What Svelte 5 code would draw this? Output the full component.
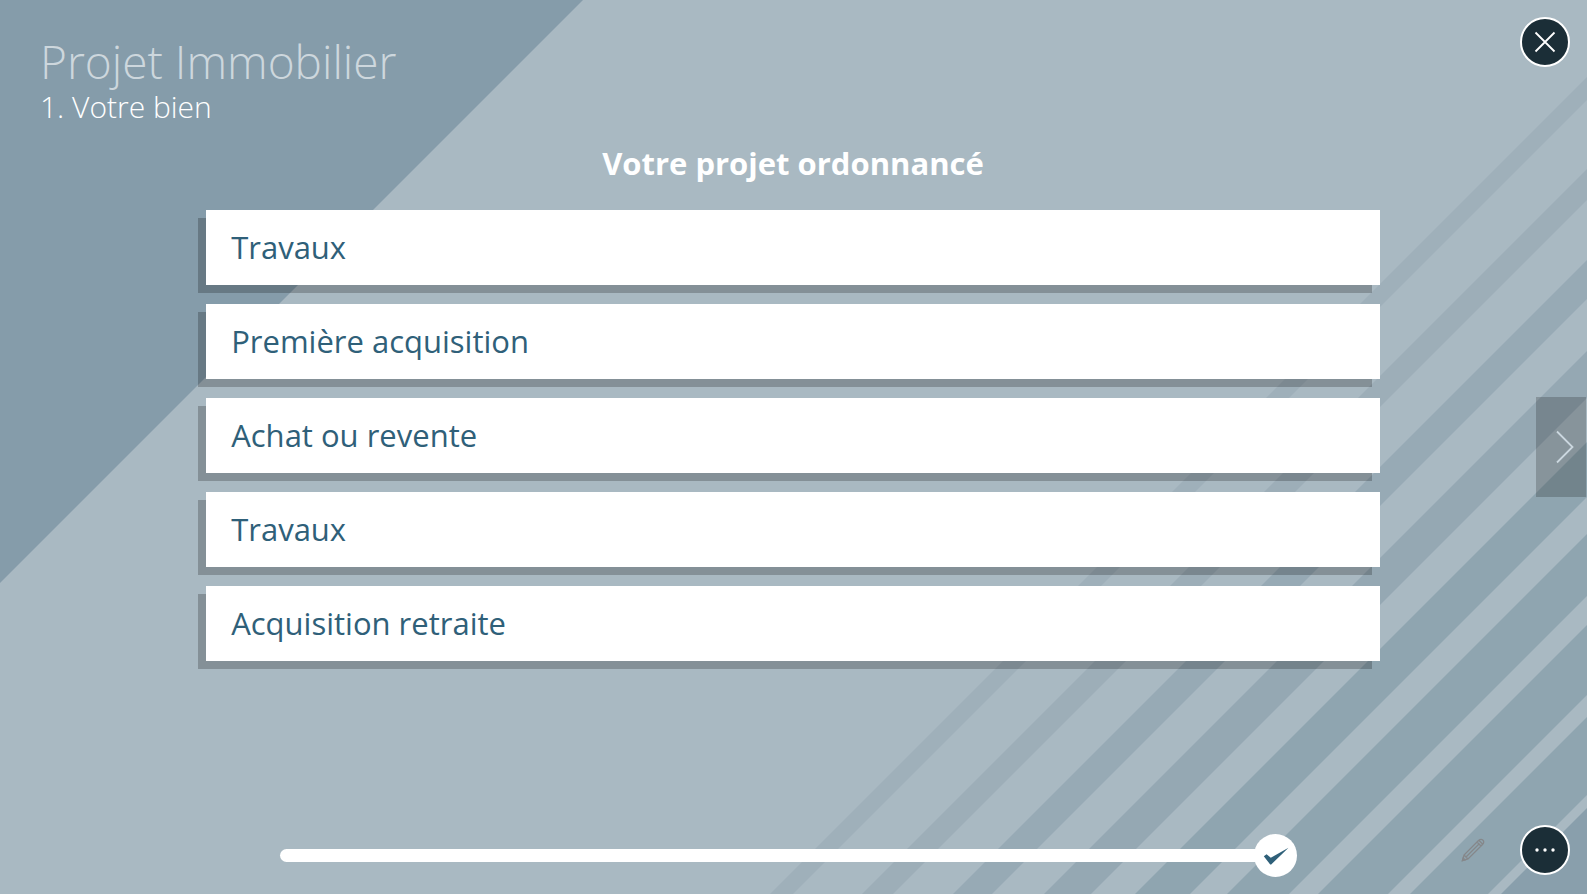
<script>
  const steps = [
    'Travaux',
    'Première acquisition',
    'Achat ou revente',
    'Travaux',
    'Acquisition retraite'
  ];

  // Each diagonal band is given by its two x positions on the line y = 0.
  const bands = [
    { from: 1664, to: 1687, fill: '#9fb0ba' },
    { from: 1756, to: 1787, fill: '#9daeb8' },
    { from: 1847, to: 1886, fill: '#97aab5' },
    { from: 1938, to: 1985, fill: '#95a8b3' },
    { from: 2029, to: 2084, fill: '#8fa5b0' },
    { from: 2121, to: 2183, fill: '#8fa5b0' },
    { from: 2212, to: 2282, fill: '#8fa5b0' },
    { from: 2304, to: 2382, fill: '#8fa5b0' },
    { from: 2395, to: 2482, fill: '#899fac' }
  ];
  const points = ({ from, to }) =>
    `${from},0 ${to},0 ${to - 894},894 ${from - 894},894`;
</script>

<div class="page">
  <svg class="backdrop" viewBox="0 0 1587 894" preserveAspectRatio="xMaxYMax slice" aria-hidden="true">
    <polygon points="0,0 583,0 0,583" fill="#859caa" />
    {#each bands as band}
      <polygon points={points(band)} fill={band.fill} />
    {/each}
  </svg>

  <header>
    <div>
      <h1>Projet Immobilier</h1>
      <p class="chapter">1. Votre bien</p>
    </div>
    <button class="round" type="button" aria-label="Fermer">
      <svg width="24" height="24" viewBox="0 0 24 24" aria-hidden="true">
        <path d="M2.5 2.5 21.5 21.5M21.5 2.5 2.5 21.5" stroke="#fff" stroke-width="1.8" />
      </svg>
    </button>
  </header>

  <main>
    <h2>Votre projet ordonnancé</h2>
    <ol>
      {#each steps as step}
        <li>{step}</li>
      {/each}
    </ol>
  </main>

  <button class="next" type="button" aria-label="Suivant">
    <svg width="18" height="34" viewBox="0 0 18 34" aria-hidden="true">
      <path d="M1 1.5 16.5 17 1 32.5" fill="none" stroke="#cbd7df" stroke-width="1.8" />
    </svg>
  </button>

  <footer>
    <div class="progress">
      <div class="track"></div>
      <button class="done" type="button" aria-label="Valider">
        <svg width="26" height="20" viewBox="0 0 26 20" aria-hidden="true">
          <path d="M.8 10.300 3.600 8.300 7.800 11.800 25.500 1.800 8.200 18.500 7.200 18.500Z" fill="#2f6079" />
        </svg>
      </button>
    </div>
    <div class="tools">
      <button class="edit" type="button" aria-label="Annoter">
        <svg width="24" height="24" viewBox="0 0 24 24" fill="none" stroke="#85878a" stroke-width="1.3" aria-hidden="true">
          <path d="M1.500 22.500 3 17 17.500 2.500Q20 .5 22 2.200 23.600 4 21.500 6.500L7 21ZM3 17 7 21M16 4 20 8M18 2.500 21.800 6.200M5 19 18.500 5.500" />
          <path d="M1.500 22.500 2.200 20 4 21.800Z" fill="#85878a" />
        </svg>
      </button>
      <button class="round" type="button" aria-label="Plus d'options">
        <svg width="24" height="24" viewBox="0 0 24 24" fill="#fff" aria-hidden="true">
          <circle cx="4" cy="12" r="1.7" />
          <circle cx="12" cy="12" r="1.7" />
          <circle cx="20" cy="12" r="1.7" />
        </svg>
      </button>
    </div>
  </footer>
</div>

<style>
  .page {
    position: relative;
    isolation: isolate;
    display: flex;
    flex-direction: column;
    box-sizing: border-box;
    min-height: 100vh;
    padding-right: 1px;
    overflow: hidden;
    background: #a9b9c2;
    color: #fff;
    font-family: 'Open Sans', 'Noto Sans', sans-serif;
  }

  .backdrop {
    position: absolute;
    inset: 0;
    z-index: -1;
    width: 100%;
    height: 100%;
  }

  h1,
  h2,
  p,
  ol {
    margin: 0;
    padding: 0;
    font-weight: inherit;
  }

  button {
    display: flex;
    align-items: center;
    justify-content: center;
    box-sizing: border-box;
    padding: 0;
    border: 0;
    background: none;
    cursor: pointer;
  }

  header {
    display: flex;
    align-items: flex-start;
    justify-content: space-between;
    padding: 17px 16px 0 40px;
  }

  h1 {
    padding-top: 14px;
    color: #cdd7dd;
    font-size: 46px;
    font-weight: 300;
    line-height: 60px;
  }

  .chapter {
    font-size: 30px;
    font-weight: 300;
    line-height: 32px;
  }

  .round {
    width: 50px;
    height: 50px;
    border: 2px solid #fff;
    border-radius: 50%;
    background: #1b2e37;
  }

  main {
    flex: 1;
    padding: 17px 13% 32px;
  }

  h2 {
    font-size: 31px;
    font-weight: 700;
    line-height: 46px;
    text-align: center;
  }

  ol {
    display: grid;
    gap: 19px;
    padding-top: 24px;
    list-style: none;
  }

  li {
    padding: 0 25px;
    background: #fff;
    box-shadow: -8px 8px 0 rgb(0 0 0 / 22%);
    color: #2f6079;
    font-size: 31px;
    line-height: 75px;
  }

  .next {
    position: absolute;
    top: 50%;
    right: 1px;
    width: 50px;
    height: 100px;
    padding-left: 8px;
    transform: translateY(-50%);
    background: rgb(0 0 0 / 20%);
  }

  footer {
    display: grid;
    grid-template-columns: 1fr auto;
    align-items: center;
    padding: 0 16px 17px 280px;
  }

  .progress {
    display: flex;
    align-items: center;
    padding-top: 12px;
    margin-right: 164px;
  }

  .track {
    flex: 1;
    height: 13px;
    margin-right: -8px;
    border-radius: 7px;
    background: #fff;
  }

  .done {
    width: 43px;
    height: 43px;
    border-radius: 50%;
    background: #fff;
  }

  .tools {
    display: flex;
    align-items: center;
    gap: 35px;
  }
</style>
